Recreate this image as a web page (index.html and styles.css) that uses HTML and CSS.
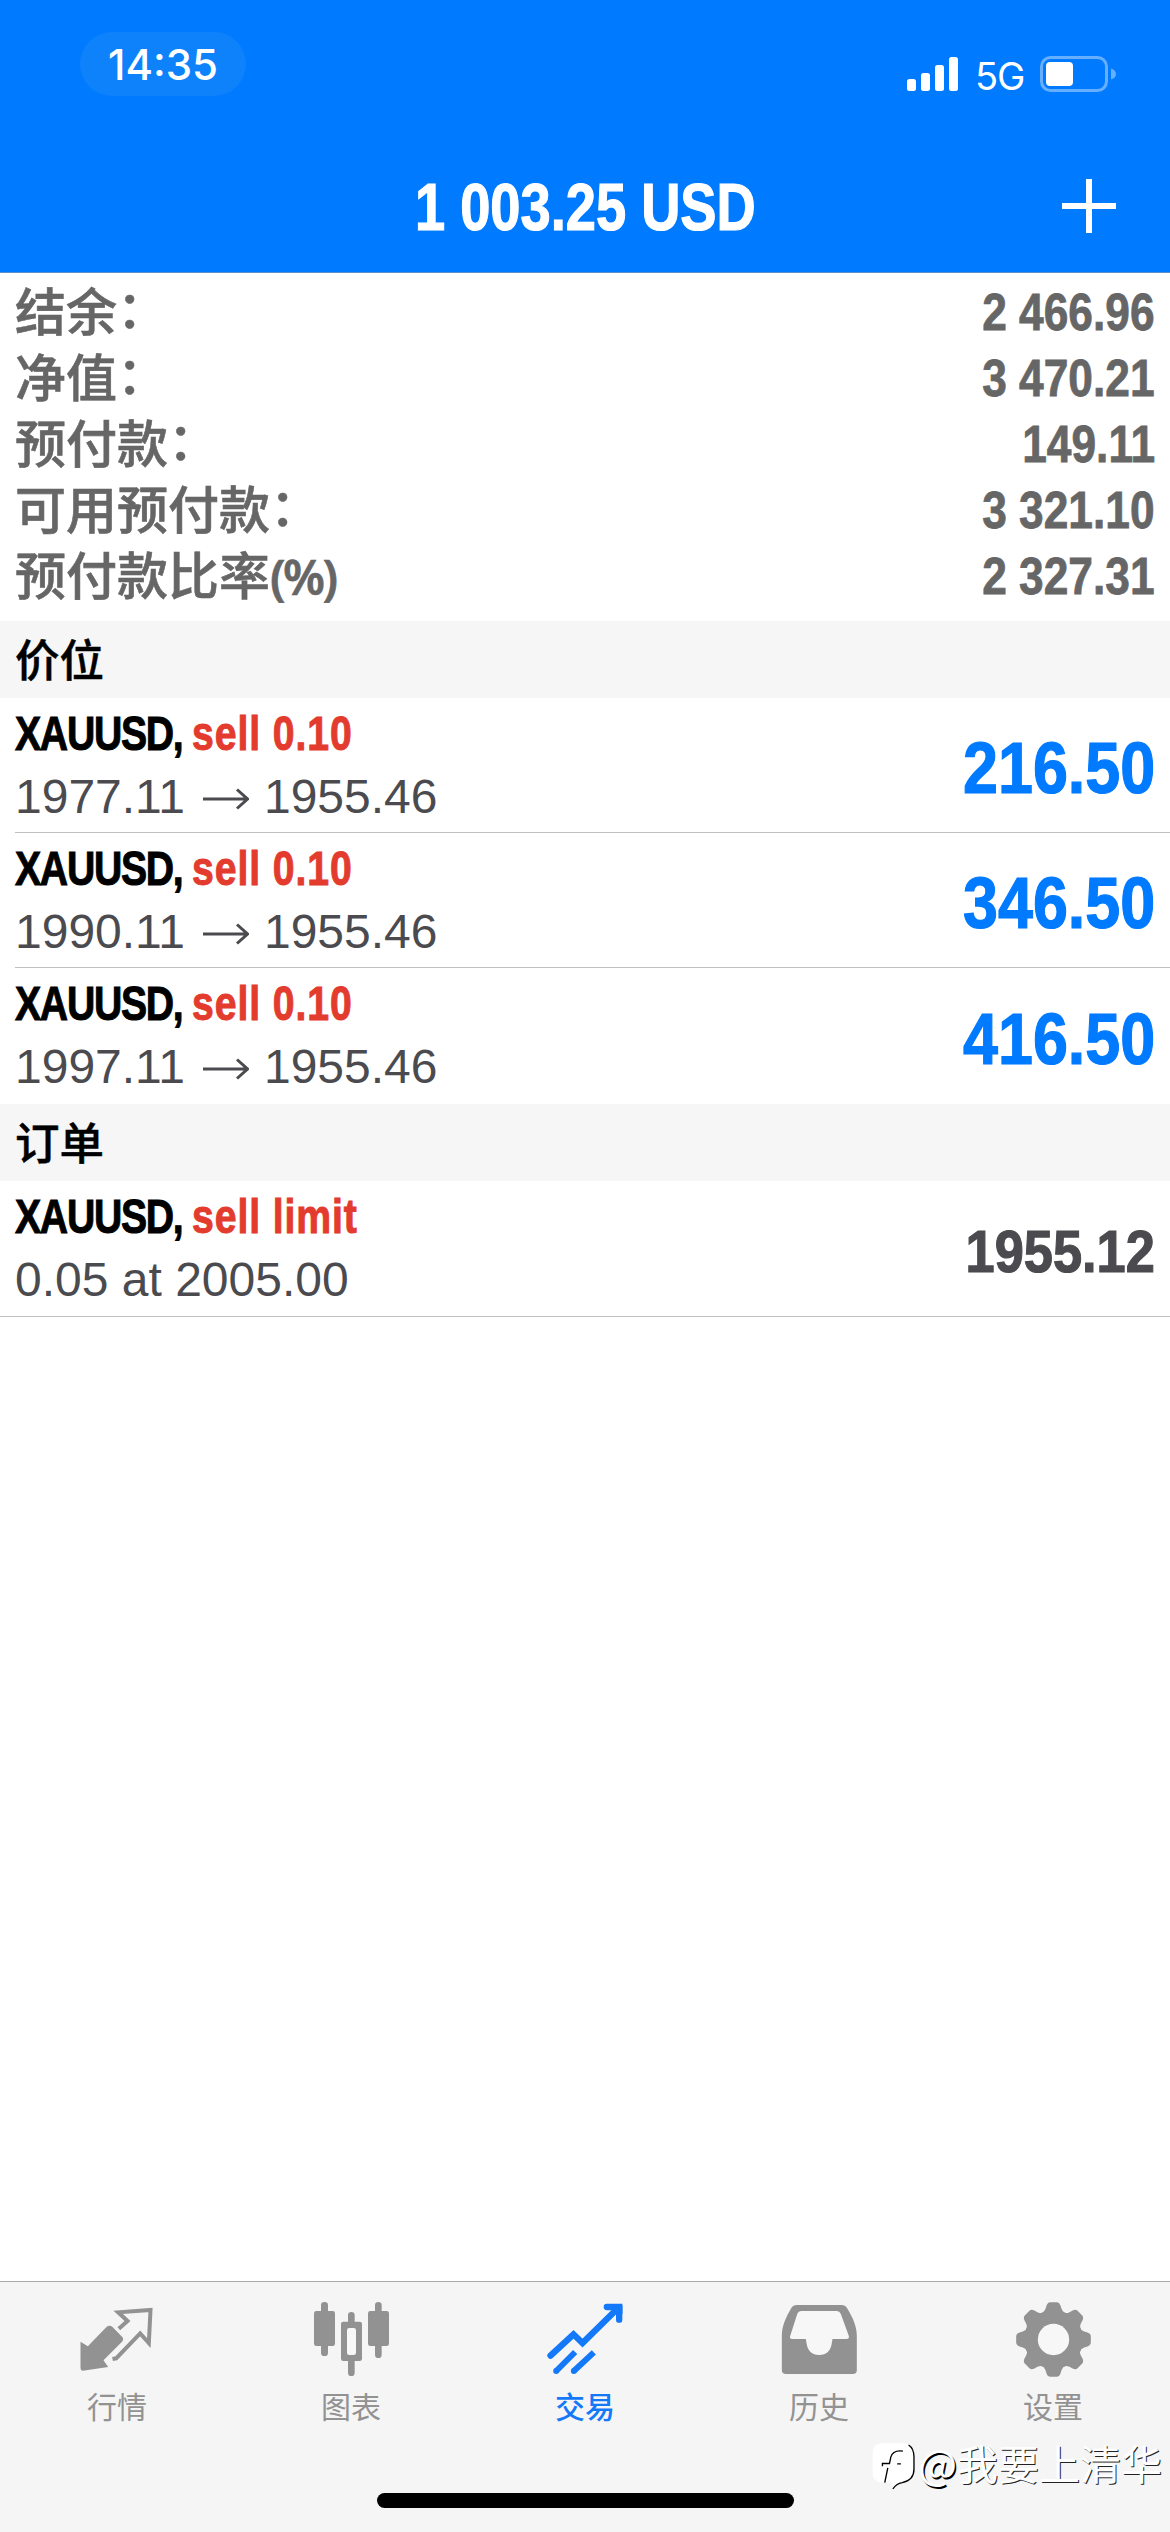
FILE: index.html
```html
<!DOCTYPE html>
<html lang="zh-CN">
<head>
<meta charset="utf-8">
<title>交易</title>
<link rel="stylesheet" href="styles.css">
</head>
<body>
<div class="app">
  <header class="header">
    <div class="status">
      <span class="clock">14:35</span>
      <div class="status-right">
        <svg class="signal" viewBox="0 0 52 34"><rect x="0" y="22" width="9" height="12" rx="2.5"/><rect x="14" y="16" width="9" height="18" rx="2.5"/><rect x="28" y="8" width="9" height="26" rx="2.5"/><rect x="42" y="0" width="9" height="34" rx="2.5"/></svg>
        <span class="network">5G</span>
        <svg class="battery" viewBox="0 0 77 36"><rect class="battery-shell" x="1.5" y="1.5" width="65" height="33" rx="9"/><rect x="6" y="6" width="27" height="24" rx="4"/><path class="battery-nub" d="M71 12.5q5 1.5 5 5.5t-5 5.5z"/></svg>
      </div>
    </div>
    <div class="navbar">
      <h1 class="title">1 003.25 USD</h1>
      <svg class="add" viewBox="0 0 54 54"><path d="M27 0v54M0 27h54"/></svg>
    </div>
  </header>

  <main class="content">
    <dl class="summary">
      <div class="summary-row"><dt>结余<span class="colon">：</span></dt><dd>2 466.96</dd></div>
      <div class="summary-row"><dt>净值<span class="colon">：</span></dt><dd>3 470.21</dd></div>
      <div class="summary-row"><dt>预付款<span class="colon">：</span></dt><dd>149.11</dd></div>
      <div class="summary-row"><dt>可用预付款<span class="colon">：</span></dt><dd>3 321.10</dd></div>
      <div class="summary-row"><dt>预付款比率<span class="percent">(%)</span></dt><dd>2 327.31</dd></div>
    </dl>

    <h2 class="section">价位</h2>
    <ul class="list">
      <li class="item">
        <div class="info">
          <div class="symbol">XAUUSD, <span class="side">sell 0.10</span></div>
          <div class="detail"><span>1977.11</span><svg class="arrow" viewBox="0 0 46 22"><path d="M0 11h44M34 1.500l10.500 9.500-10.500 9.500"/></svg><span>1955.46</span></div>
        </div>
        <div class="profit">216.50</div>
      </li>
      <li class="item">
        <div class="info">
          <div class="symbol">XAUUSD, <span class="side">sell 0.10</span></div>
          <div class="detail"><span>1990.11</span><svg class="arrow" viewBox="0 0 46 22"><path d="M0 11h44M34 1.500l10.500 9.500-10.500 9.500"/></svg><span>1955.46</span></div>
        </div>
        <div class="profit">346.50</div>
      </li>
      <li class="item">
        <div class="info">
          <div class="symbol">XAUUSD, <span class="side">sell 0.10</span></div>
          <div class="detail"><span>1997.11</span><svg class="arrow" viewBox="0 0 46 22"><path d="M0 11h44M34 1.500l10.500 9.500-10.500 9.500"/></svg><span>1955.46</span></div>
        </div>
        <div class="profit">416.50</div>
      </li>
    </ul>

    <h2 class="section">订单</h2>
    <ul class="list orders">
      <li class="item">
        <div class="info">
          <div class="symbol">XAUUSD, <span class="side">sell limit</span></div>
          <div class="detail">0.05 at 2005.00</div>
        </div>
        <div class="profit price">1955.12</div>
      </li>
    </ul>
  </main>

  <nav class="tabbar">
    <div class="tabs">
      <a class="tab">
        <svg class="icon" viewBox="238.500 96 225 225"><path d="M240 215L262 229 318 171Q327 163 336 171L366 202Q371 208 366 214L309 271 323 291 247 302Q240 302 240 295Z"/><path class="line" d="M355 176L381 153 353 127 450 120 445 219 419 190 347 265 336 267" stroke-width="12"/></svg>
        <span>行情</span>
      </a>
      <a class="tab">
        <svg class="icon" viewBox="939 96 225 225"><rect x="939" y="123" width="63" height="105" rx="7"/><rect x="960" y="96" width="21" height="162" rx="10"/><rect x="1101" y="123" width="63" height="105" rx="7"/><rect x="1122" y="96" width="20" height="168" rx="10"/><rect x="1041" y="126" width="20" height="45" rx="10"/><rect x="1041" y="258" width="20" height="60" rx="10"/><rect x="1020" y="155" width="63" height="118" rx="7"/><rect class="hole" x="1038" y="174" width="27" height="81" rx="7"/></svg>
        <span>图表</span>
      </a>
      <a class="tab active">
        <svg class="icon" viewBox="142.500 96 225 225"><path class="line" d="M150 257L219 193 246 219 352 115" stroke-width="19" stroke-linecap="round"/><path class="line" d="M319 111H356V149" stroke-width="19" stroke-linecap="round"/><path d="M335 102H360Q366 102 366 108V132H335Z"/><path class="line" d="M167 303L224 246M220 303L280 247" stroke-width="18"/><circle cx="167" cy="303" r="9"/><circle cx="220" cy="303" r="9"/></svg>
        <span>交易</span>
      </a>
      <a class="tab">
        <svg class="icon" viewBox="843.500 96 225 225"><path d="M888 105H1022Q1033 105 1039 115C1056 143 1068 169 1068 198V300Q1068 312 1056 312H855Q843 312 843 300V198C843 169 855 142 871 115Q877 105 888 105Z"/><path class="hole" d="M902 123H1007Q1016 123 1020 132L1044 198Q1046 207 1037 207H995L993 219Q988 255 955 255 922 255 917 219L915 207H874Q865 207 868 198L889 133Q893 123 902 123Z"/></svg>
        <span>历史</span>
      </a>
      <a class="tab">
        <svg class="icon" viewBox="-112.500 -112.500 225 225"><circle r="88"/><path id="tooth" d="M-36-78Q-27-83-24-92L-21-102Q-17-112-10-112H10Q17-112 21-102L24-92Q27-83 36-78L20-50H-20Z"/><use href="#tooth" transform="rotate(45)"/><use href="#tooth" transform="rotate(90)"/><use href="#tooth" transform="rotate(135)"/><use href="#tooth" transform="rotate(180)"/><use href="#tooth" transform="rotate(225)"/><use href="#tooth" transform="rotate(270)"/><use href="#tooth" transform="rotate(315)"/><circle class="hole" r="47"/></svg>
        <span>设置</span>
      </a>
    </div>
    <div class="home-indicator"></div>
  </nav>

  <div class="watermark">
    <svg class="mark" viewBox="22 50 128 140"><path class="mark-bg" d="M52 51H112Q146 51 146 88V130Q146 164 106 168L84 187 82 168H56Q24 168 24 138V82Q24 51 52 51Z"/><path class="mark-line" d="M114 74Q84 70 78 92L74 111H53V119M97 112H108M69 124L60 168M131 56Q147 66 147 92V128Q147 160 112 168 94 171 84 187"/></svg>
    <span><span class="at">@</span>我要上清华</span>
  </div>
</div>
</body>
</html>
```

FILE: styles.css
```css
* { box-sizing: border-box; margin: 0; padding: 0; }

body {
  width: 1170px;
  background: #fff;
  font-family: "Liberation Sans", "Noto Sans CJK SC", sans-serif;
}

.app {
  position: relative;
  display: flex;
  flex-direction: column;
  height: 2532px;
  overflow: hidden;
}

svg { display: block; flex: none; }

.header {
  height: 273px;
  background: #007aff;
  color: #fff;
  border-bottom: 1px solid #5a8fcb;
}

.status {
  display: flex;
  justify-content: space-between;
  align-items: flex-start;
  height: 134px;
  padding: 32px 53px 0 80px;
}

.clock {
  width: 166px;
  height: 64px;
  border-radius: 32px;
  background: #0d82fb;
  font: 500 42px/65px Inter, sans-serif;
  text-align: center;
}

.status-right { display: flex; align-items: center; height: 36px; margin-top: 24px; }
.signal { width: 52px; height: 34px; fill: #fff; margin-right: 16px; }
.network { width: 49px; font: 400 38px/36px Inter, sans-serif; letter-spacing: -1px; padding-top: 3px; }
.battery { width: 77px; height: 36px; margin-left: 16px; fill: #fff; }
.battery .battery-shell { fill: none; stroke: #66afff; stroke-width: 3; }
.battery .battery-nub { fill: #66afff; }

.navbar {
  display: grid;
  grid-template-columns: 1fr auto 1fr;
  align-items: center;
  height: 138px;
  padding: 6px 54px 0;
}

.title {
  grid-column: 2;
  padding-top: 2px;
  font: 700 66px/78px "Liberation Sans", sans-serif;
  white-space: nowrap;
  transform: scaleX(.822);
  -webkit-text-stroke: 1.200px currentColor;
}

.add { justify-self: end; width: 54px; height: 54px; stroke: #fff; stroke-width: 6; }

.content { flex: 1; }

.summary { height: 348px; padding: 6px 15px 0; color: #666; }
.summary-row { display: flex; justify-content: space-between; align-items: center; height: 66px; }
.summary dt {
  padding-top: 4px;
  font-size: 51px;
  font-weight: 500;
  line-height: 62px;
  white-space: nowrap;
  -webkit-text-stroke: .600px currentColor;
}
.summary dd {
  padding-top: 1px;
  font-size: 51px;
  font-weight: 700;
  line-height: 66px;
  transform: scaleX(.868);
  transform-origin: right;
  -webkit-text-stroke: .800px currentColor;
}
.colon { line-height: 1; vertical-align: 3px; }
.percent { font-family: "Noto Sans", sans-serif; font-size: 48px; font-weight: 600; line-height: 1; letter-spacing: -2.500px; }

.section {
  height: 77px;
  padding: 3px 0 0 15px;
  background: #f6f6f6;
  color: #000;
  font-size: 44.500px;
  font-weight: 500;
  line-height: 75px;
  -webkit-text-stroke: .500px currentColor;
}

.list { list-style: none; }
.item {
  display: flex;
  justify-content: space-between;
  align-items: center;
  height: 135px;
  margin-left: 15px;
  padding: 1px 15px 0 0;
  border-bottom: 1px solid #c0bfc4;
}
.item:last-child { height: 136px; border-bottom-color: transparent; }
.orders .item:last-child { margin-left: 0; padding-left: 15px; border-bottom-color: #c0bfc4; }

.symbol {
  color: #000;
  font-size: 49px;
  font-weight: 700;
  line-height: 58px;
  padding-bottom: 4px;
  letter-spacing: -1.600px;
  white-space: nowrap;
  transform: scaleX(.8);
  transform-origin: left;
  -webkit-text-stroke: 1px currentColor;
}
.side { color: #e33b2d; letter-spacing: 1.100px; }

.detail { display: flex; align-items: center; color: #4b4b4f; font-size: 48px; line-height: 62px; }
.arrow { width: 46px; height: 22px; margin: 4px 15px 0 18px; fill: none; stroke: #4b4b4f; stroke-width: 3; }

.profit {
  padding-top: 5px;
  color: #007aff;
  font-size: 72px;
  font-weight: 700;
  line-height: 80px;
  transform: scaleX(.873);
  transform-origin: right;
  -webkit-text-stroke: 1.200px currentColor;
}
.price { color: #4b4b4f; font-size: 60px; }

.tabbar {
  height: 251px;
  background: #f5f5f5;
  border-top: 1px solid #a9a9a9;
}
.tabs { display: grid; grid-template-columns: repeat(5, 1fr); height: 211px; }
.tab {
  display: flex;
  flex-direction: column;
  align-items: center;
  gap: 9px;
  padding-top: 20px;
  color: #929292;
  font-size: 30px;
  line-height: 44px;
}
.active { color: #1479f8; }
.active span { font-weight: 500; }
.icon { width: 75px; height: 75px; fill: currentColor; overflow: visible; }
.icon .line { fill: none; stroke: currentColor; }
.icon .hole { fill: #f7f7f7; }

.home-indicator { width: 417px; height: 15px; margin: 0 auto; border-radius: 8px; background: #000; }

.watermark {
  position: absolute;
  right: 8px;
  bottom: 40px;
  display: flex;
  align-items: center;
  color: #fff;
  font: 400 41px/60px "Noto Sans CJK SC", sans-serif;
  text-shadow: 1px 1px 0 #222;
}
.at { text-shadow: 1.500px 1.500px 0 #000; }
.mark { width: 43px; height: 47px; margin: 8px 3px 0 0; }
.mark-bg { fill: #fff; }
.mark-line { fill: none; stroke: #000; stroke-width: 4; }
```
